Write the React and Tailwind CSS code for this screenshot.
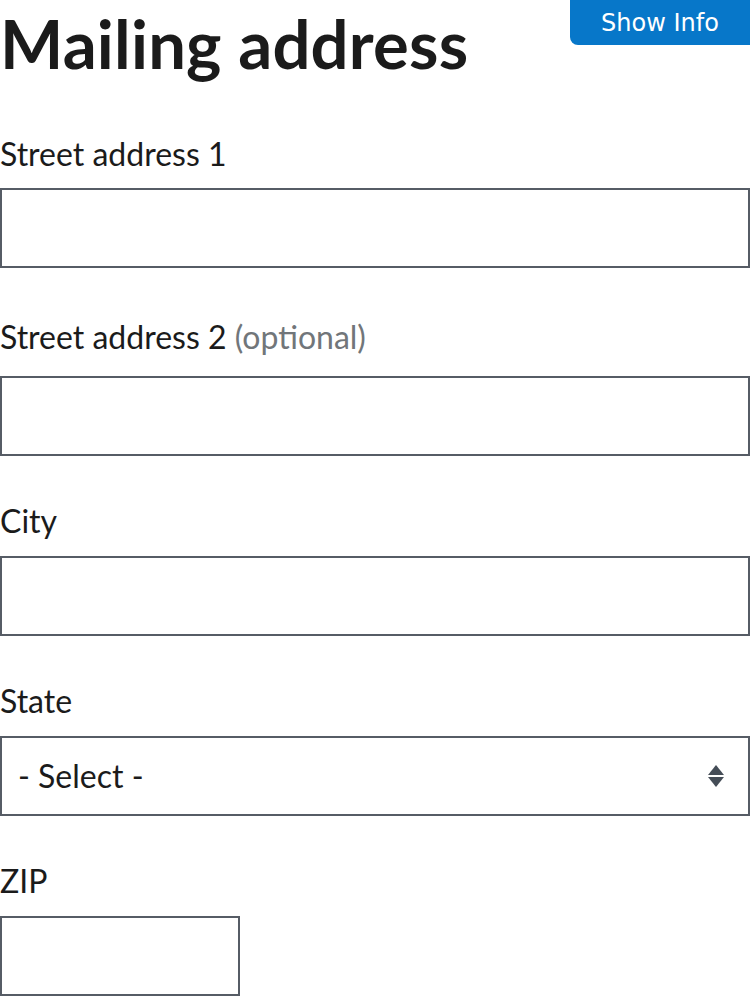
const fields = [
  { id: "street1", label: "Street address 1", mt: "mt-[61px]", mb: "mb-[18px]" },
  { id: "street2", label: "Street address 2", optional: true, mt: "mt-[53px]", mb: "mb-[23px]" },
  { id: "city", label: "City", mt: "mt-[49px]", mb: "mb-[19px]" },
];

const SortArrows = () => (
  <svg width="18" height="24" viewBox="0 0 18 24" className="text-[#454d57]" aria-hidden="true">
    <path d="M9 1 L17 11 L1 11 Z" fill="currentColor" />
    <path d="M1 13 L17 13 L9 23 Z" fill="currentColor" />
  </svg>
);

const App = () => {
  return (
    <div className="relative min-h-[996px] bg-white font-['Lato','Noto_Sans',sans-serif] text-[#1b1b1b]">
      {/* Floating info button */}
      <button
        type="button"
        className="absolute right-0 top-0 flex h-[45px] w-[180px] items-center justify-center rounded-bl-lg bg-[#0777c9] font-['DejaVu_Sans',sans-serif] text-[24px] text-white"
      >
        Show Info
      </button>

      <form className="flex flex-col">
        <h1 className="mt-[10px] text-[67px] font-bold leading-none tracking-[0.2px]">
          Mailing address
        </h1>

        {fields.map((f) => (
          <div key={f.id} className="flex flex-col">
            <label htmlFor={f.id} className={`${f.mt} ${f.mb} block text-[32px] leading-[32px]`}>
              {f.label}
              {f.optional && <span className="text-[#71767a]"> (optional)</span>}
            </label>
            <input
              id={f.id}
              type="text"
              className="h-20 w-full border-2 border-[#565c65] bg-white px-4 text-[32px] outline-none"
            />
          </div>
        ))}

        {/* State */}
        <div className="flex flex-col">
          <label htmlFor="state" className="mt-[49px] mb-[19px] block text-[32px] leading-[32px]">
            State
          </label>
          <div className="relative h-20 w-full">
            <select
              id="state"
              className="h-20 w-full appearance-none border-2 border-[#565c65] bg-white pl-[16px] text-[32px] text-[#1b1b1b] outline-none"
            >
              <option>- Select -</option>
            </select>
            <div className="pointer-events-none absolute right-[25px] top-1/2 -translate-y-1/2">
              <SortArrows />
            </div>
          </div>
        </div>

        {/* ZIP */}
        <div className="flex flex-col">
          <label htmlFor="zip" className="mt-[49px] mb-[19px] block text-[32px] leading-[32px]">
            ZIP
          </label>
          <input
            id="zip"
            type="text"
            className="h-20 w-[240px] border-2 border-[#565c65] bg-white px-4 text-[32px] outline-none"
          />
        </div>
      </form>
    </div>
  );
};

export default App;
